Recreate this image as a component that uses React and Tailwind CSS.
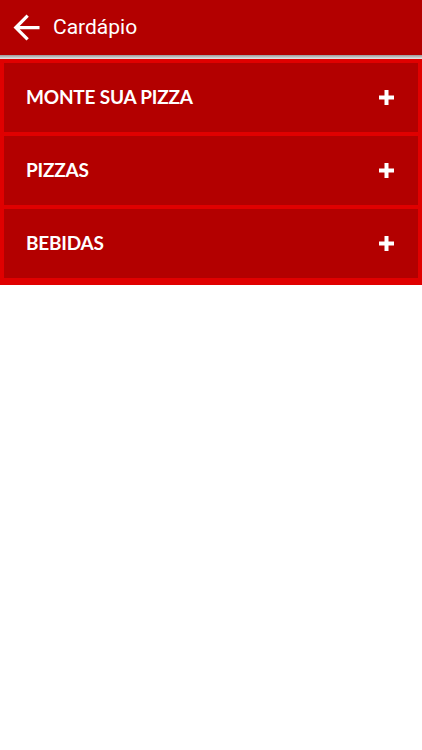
import React from "react";

function Plus() {
  return (
    <svg width="15" height="15" viewBox="0 0 15 15" aria-hidden="true">
      <rect x="5.5" y="0" width="4" height="15" fill="#fff" />
      <rect x="0" y="5.5" width="15" height="4" fill="#fff" />
    </svg>
  );
}

function Item({ label }) {
  return (
    <div className="h-[69px] bg-[#b30000] flex items-center justify-between pl-[22px] pr-[24px]">
      <span
        className="text-white font-bold text-[19px] tracking-[-0.2px]"
        style={{ fontFamily: "Lato, 'Open Sans', sans-serif" }}
      >
        {label}
      </span>
      <Plus />
    </div>
  );
}

export default function App() {
  return (
    <div className="w-[422px] h-[750px] bg-white">
      <div className="h-[55px] bg-[#b30000] flex items-center">
        <svg
          className="ml-[7px]"
          width="39"
          height="39"
          viewBox="0 0 24 24"
          aria-hidden="true"
        >
          <path
            fill="#fff"
            d="M20 11H7.83l5.59-5.59L12 4l-8 8 8 8 1.41-1.41L7.83 13H20v-2z"
          />
        </svg>
        <span
          className="ml-[7px] text-white text-[21px]"
          style={{ fontFamily: "Roboto, 'Noto Sans', sans-serif" }}
        >
          Cardápio
        </span>
      </div>
      <div className="h-[4px] bg-gradient-to-b from-[#9a9a9a] to-[#e8e8e8]" />
      <div className="bg-[#e00000] pt-[4px] pb-[7px] px-[4px] flex flex-col gap-[4px]">
        <Item label="MONTE SUA PIZZA" />
        <Item label="PIZZAS" />
        <Item label="BEBIDAS" />
      </div>
    </div>
  );
}
